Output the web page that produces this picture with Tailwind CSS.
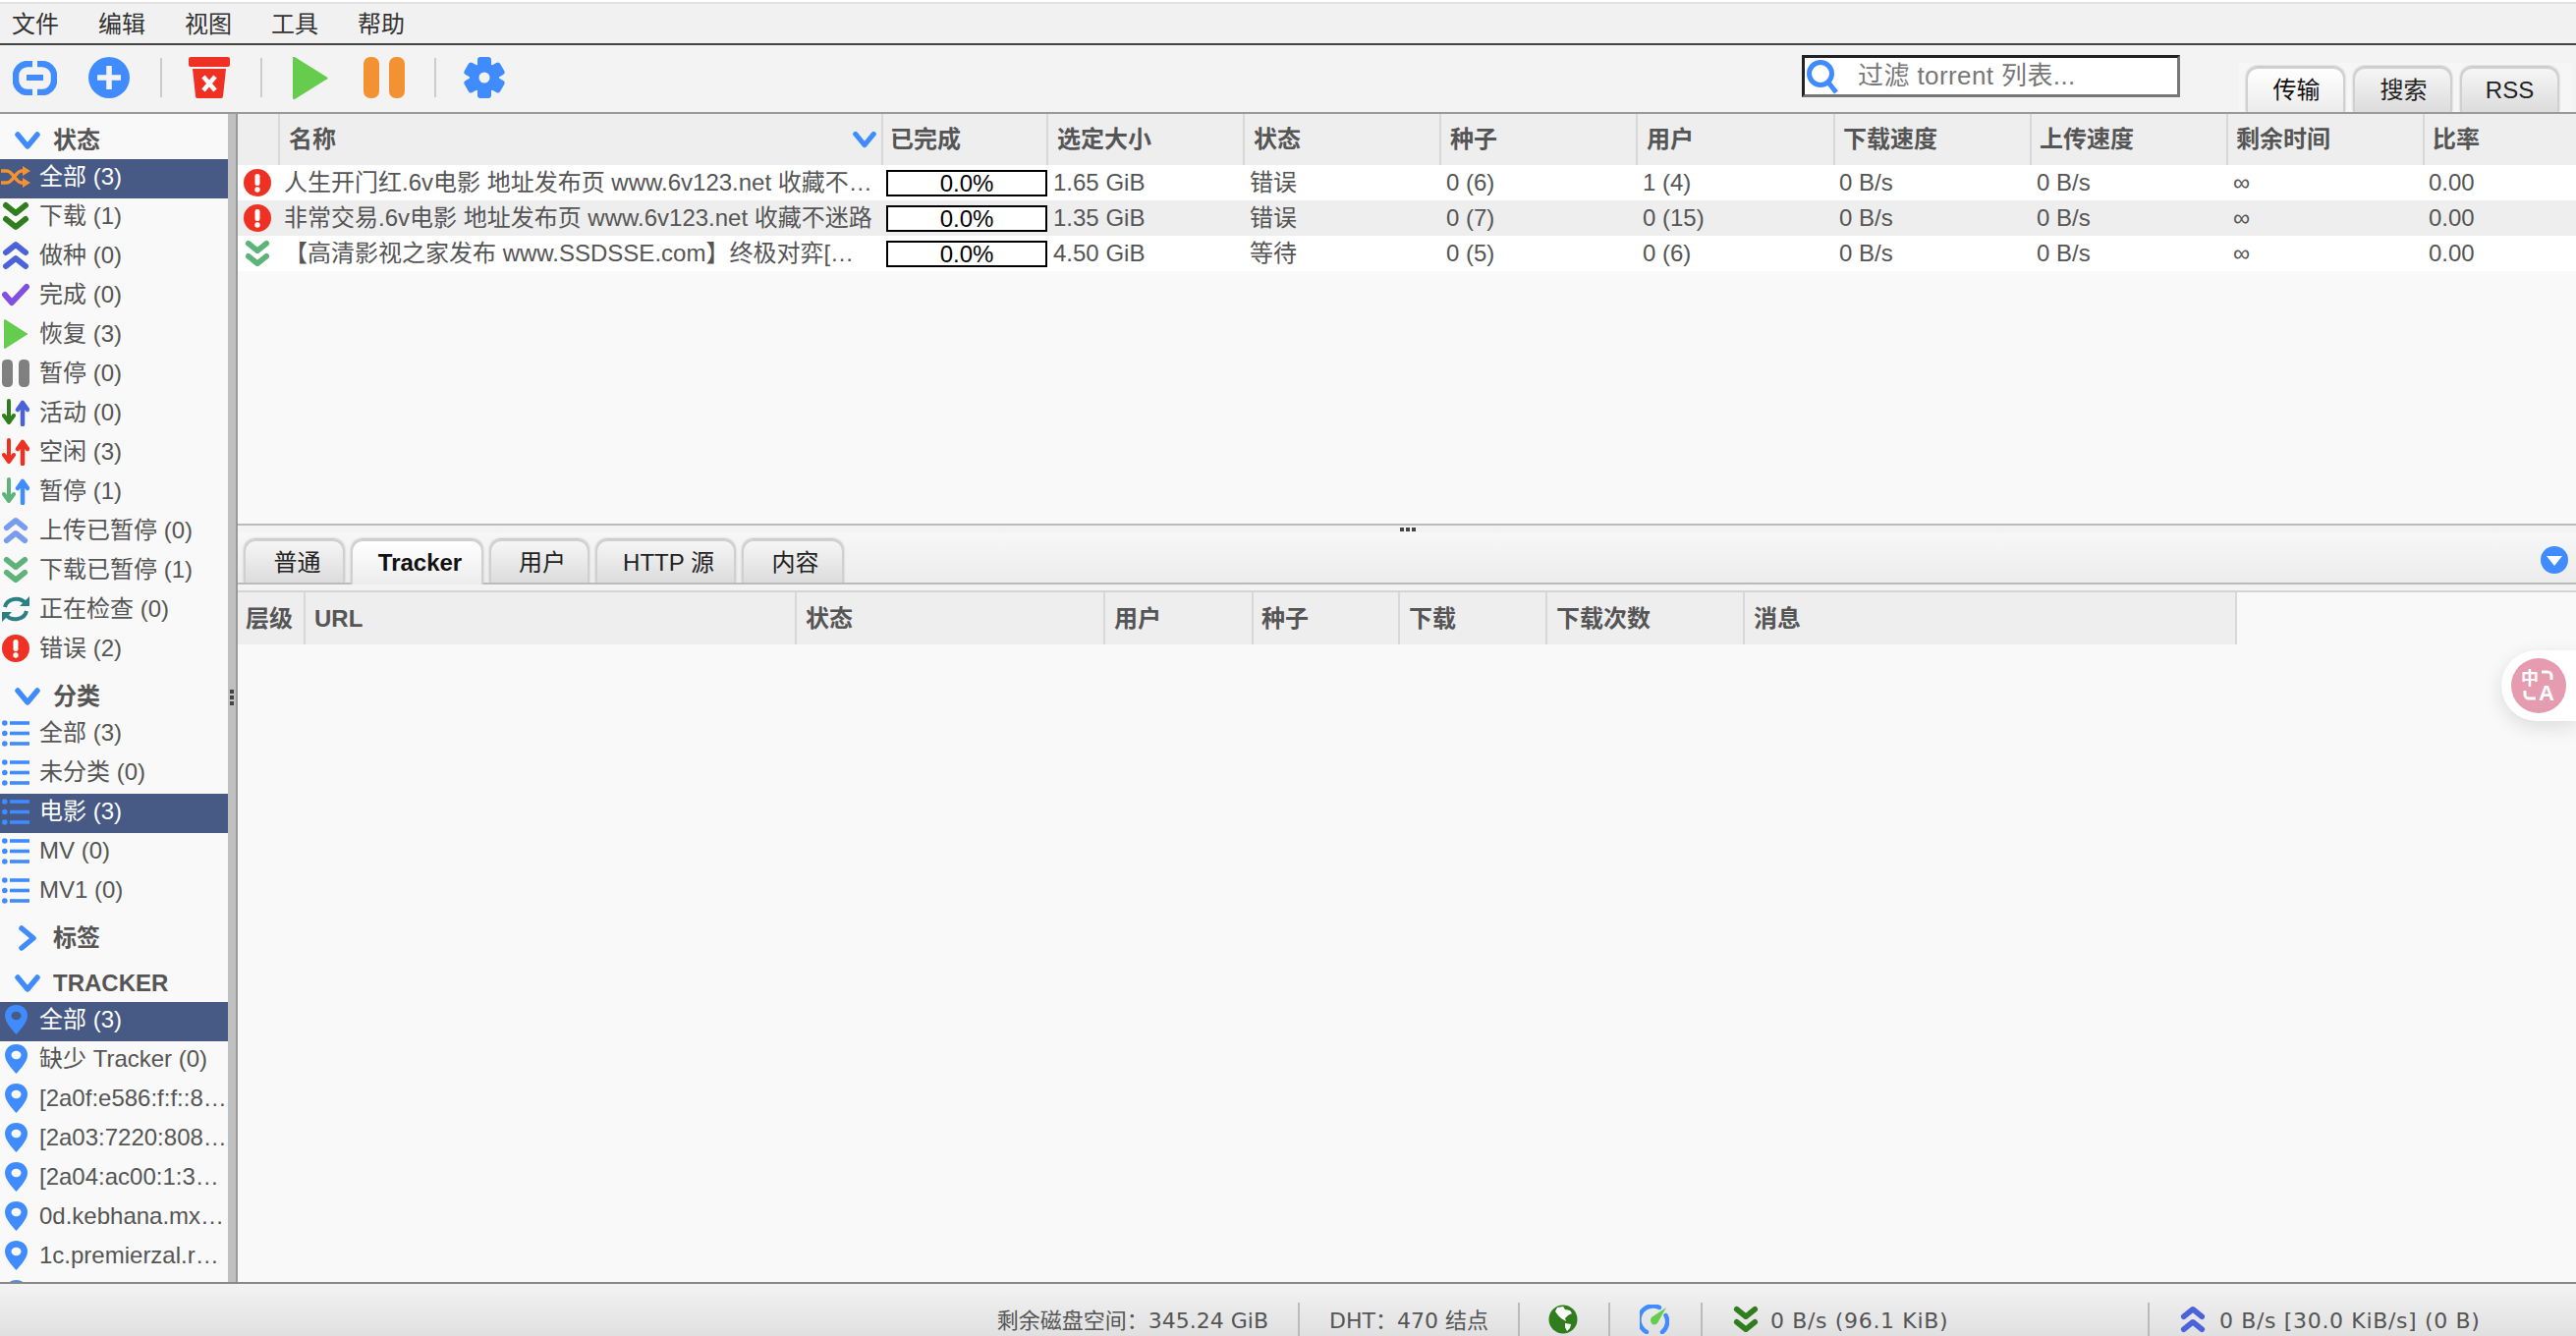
<!DOCTYPE html>
<html lang="zh-CN">
<head>
<meta charset="UTF-8">
<title>qBittorrent WebUI</title>
<script src="https://cdn.jsdelivr.net/npm/@tailwindcss/browser@4"></script>
</head>
<body class="m-0 overflow-hidden bg-white">
<svg class="hidden">
  <defs>
    <symbol id="dd" viewBox="0 0 28 30"><path d="M4 3l10 8 10-8M4 17l10 8 10-8" fill="none" stroke="currentColor" stroke-width="6" stroke-linecap="round" stroke-linejoin="round" transform="translate(0 1)"/></symbol>
    <symbol id="uu" viewBox="0 0 28 30"><path d="M4 13l10-8 10 8M4 27l10-8 10 8" fill="none" stroke="currentColor" stroke-width="6" stroke-linecap="round" stroke-linejoin="round" transform="translate(0 -1)"/></symbol>
    <symbol id="updown" viewBox="0 0 28 28"><path d="M7 2v22M2 17l5 7 5-7" fill="none" stroke="var(--d)" stroke-width="4" stroke-linecap="round" stroke-linejoin="round"/><path d="M21 26V4M16 11l5-7 5 7" fill="none" stroke="var(--u)" stroke-width="4.5" stroke-linecap="round" stroke-linejoin="round"/></symbol>
    <symbol id="err" viewBox="0 0 28 28"><circle cx="14" cy="14" r="14" fill="#ef3123"/><rect x="11.5" y="5" width="5" height="12" rx="2.2" fill="#fff"/><circle cx="14" cy="21" r="2.7" fill="#fff"/></symbol>
    <symbol id="list" viewBox="0 0 28 27"><g fill="#408cff"><circle cx="2.800" cy="3" r="2.800"/><circle cx="2.800" cy="13.500" r="2.800"/><circle cx="2.800" cy="24" r="2.800"/><rect x="8" y="1.200" width="20" height="3.600"/><rect x="8" y="11.700" width="20" height="3.600"/><rect x="8" y="22.200" width="20" height="3.600"/></g></symbol>
    <symbol id="pin" viewBox="0 0 23 30"><path d="M11.500 0C5 0 0 4.500 0 11c0 6 6 13 11.500 19C17 24 23 17 23 11 23 4.500 18 0 11.500 0z" fill="#408cff"/><ellipse cx="11.500" cy="11" rx="5" ry="4.200" fill="var(--h)"/></symbol>
    <symbol id="chev" viewBox="0 0 28 20"><path d="M4 4l10 12L24 4" fill="none" stroke="#408cff" stroke-width="5.500" stroke-linecap="round" stroke-linejoin="round"/></symbol>
  </defs>
</svg>

<div class="w-[2622px] h-[1360px] flex flex-col relative overflow-hidden text-[24px] text-[#555] font-['Liberation_Sans','Noto_Sans_CJK_SC',sans-serif]">

  <!-- menu -->
  <div class="h-[46px] shrink-0 pt-[2px] bg-white">
    <div class="h-full border-t-2 border-b-2 border-t-[#e2e2e2] border-b-[#444] bg-[#f1f1f1] flex items-center pl-[12px] pt-[2px] gap-[40px] text-[#333]">
      <span>文件</span><span>编辑</span><span>视图</span><span>工具</span><span>帮助</span>
    </div>
  </div>

  <!-- toolbar -->
  <div class="h-[70px] shrink-0 bg-[#f3f3f3] border-b-2 border-[#999] flex relative">
    <div class="w-[1834px] flex items-center pl-[13px] pb-[2px]">
      <svg class="w-[45px] h-[35px]" viewBox="0 0 45 35"><path d="M20 3h-5a12 12 0 0 0-12 12v5a12 12 0 0 0 12 12h5M25 3h5a12 12 0 0 1 12 12v5a12 12 0 0 1-12 12h-5" fill="none" stroke="#408cff" stroke-width="6.500"/><rect x="14" y="14" width="17" height="6" fill="#408cff"/></svg>
      <svg class="w-[42px] h-[42px] ml-[32px]" viewBox="0 0 42 42"><circle cx="21" cy="21" r="21" fill="#408cff"/><path d="M21 9v24M9 21h24" stroke="#f3f3f3" stroke-width="5.500"/></svg>
      <div class="w-[2px] h-[40px] bg-[#ccc] ml-[31px]"></div>
      <svg class="w-[42px] h-[42px] ml-[27px]" viewBox="0 0 42 42"><rect width="42" height="10" rx="2" fill="#ef3123"/><path d="M4 12h34l-3 28a2 2 0 0 1-2 2H9a2 2 0 0 1-2-2z" fill="#ef3123"/><path d="M15 20l12 14M27 20L15 34" stroke="#fff" stroke-width="4.500"/></svg>
      <div class="w-[2px] h-[40px] bg-[#ccc] ml-[31px]"></div>
      <svg class="w-[36px] h-[46px] ml-[31px]" viewBox="0 0 36 46"><path d="M2 2l32 20a1.500 1.500 0 0 1 0 3L2 45a1.500 1.500 0 0 1-2-1V2z" fill="#66cc4d"/></svg>
      <svg class="w-[42px] h-[42px] ml-[36px]" viewBox="0 0 42 42"><rect width="16" height="42" rx="7" fill="#f29233"/><rect x="26" width="16" height="42" rx="7" fill="#f29233"/></svg>
      <div class="w-[2px] h-[40px] bg-[#ccc] ml-[30px]"></div>
      <svg class="w-[42px] h-[42px] ml-[28px]" viewBox="0 0 42 42"><g fill="#408cff"><circle cx="21" cy="21" r="15"/><rect x="14" y="0" width="14" height="42" rx="3"/><rect x="14" y="0" width="14" height="42" rx="3" transform="rotate(60 21 21)"/><rect x="14" y="0" width="14" height="42" rx="3" transform="rotate(120 21 21)"/></g><circle cx="21" cy="21" r="5.500" fill="#f3f3f3"/></svg>
    </div>
    <div class="w-[385px] h-[43px] mt-[10px] bg-white border-[3px] border-t-[#222] border-l-[#222] border-r-[#777] border-b-[#777] flex items-center">
      <svg class="w-[34px] h-[36px] ml-[1px] shrink-0" viewBox="0 0 34 36"><circle cx="15" cy="15" r="11.500" fill="none" stroke="#408cff" stroke-width="5"/><path d="M23 24l8 10" stroke="#408cff" stroke-width="5"/></svg>
      <span class="ml-[19px] text-[26px] text-[#777] tracking-[0.4px]">过滤 torrent 列表...</span>
    </div>
    <div class="absolute left-[2279px] top-[18px] w-[339px] h-[50px] bg-[#f6f6f6] flex gap-[8px] pl-[7px] items-end">
      <div class="w-[101px] h-[46px] rounded-t-[12px] border-x-2 border-t-2 border-[#d0d0d0] shadow-[0_-1px_2px_#bbb] bg-linear-to-b from-white to-[#ececec] flex items-center justify-center text-[#111] pl-[2px]">传输</div>
      <div class="w-[101px] h-[46px] rounded-t-[12px] border-x-2 border-t-2 border-[#d0d0d0] shadow-[0_-1px_2px_#bbb] bg-linear-to-b from-[#f6f6f6] to-[#dcdcdc] flex items-center justify-center text-[#222] pl-[2px]">搜索</div>
      <div class="w-[101px] h-[46px] rounded-t-[12px] border-x-2 border-t-2 border-[#d0d0d0] shadow-[0_-1px_2px_#bbb] bg-linear-to-b from-[#f6f6f6] to-[#dcdcdc] flex items-center justify-center text-[#222]">RSS</div>
    </div>
  </div>

  <!-- middle -->
  <div class="flex-1 min-h-0 flex">
    <!-- sidebar -->
    <div class="w-[232px] shrink-0 bg-[#f9f9f9] overflow-hidden">
      <div class="h-[46px] flex items-center pt-[8px] pl-[14px] font-bold"><svg class="w-[28px] h-[20px]"><use href="#chev"/></svg><span class="ml-[12px]">状态</span></div>
      <div class="h-[40px] flex items-center pb-[4px] bg-[#475985] text-white">
        <svg class="w-[30px] h-[22px] ml-[1px] shrink-0" viewBox="0 0 30 22"><path d="M0 5h6c6 0 9 12 15 12h3M0 17h6c6 0 9-12 15-12h3" fill="none" stroke="#f29233" stroke-width="3.500"/><path d="M22 0l8 5-8 5zM22 12l8 5-8 5z" fill="#f29233"/></svg><span class="ml-[9px]">全部 (3)</span>
      </div>
      <div class="h-[40px] flex items-center pb-[4px]"><svg class="w-[28px] h-[30px] ml-[2px] shrink-0 text-[#2f7d1c]"><use href="#dd"/></svg><span class="ml-[10px]">下载 (1)</span></div>
      <div class="h-[40px] flex items-center pb-[4px]"><svg class="w-[28px] h-[30px] ml-[2px] shrink-0 text-[#4a63d9]"><use href="#uu"/></svg><span class="ml-[10px]">做种 (0)</span></div>
      <div class="h-[40px] flex items-center pb-[4px]"><svg class="w-[28px] h-[24px] ml-[2px] shrink-0" viewBox="0 0 28 24"><path d="M3 12l7 8L25 4" fill="none" stroke="#8250e0" stroke-width="6" stroke-linecap="round" stroke-linejoin="round"/></svg><span class="ml-[10px]">完成 (0)</span></div>
      <div class="h-[40px] flex items-center pb-[4px]"><svg class="w-[24px] h-[30px] ml-[4px] shrink-0" viewBox="0 0 24 30"><path d="M1 0l22 14a1 1 0 0 1 0 2L1 30a1 1 0 0 1-1-1V1z" fill="#66cc4d"/></svg><span class="ml-[12px]">恢复 (3)</span></div>
      <div class="h-[40px] flex items-center pb-[4px]"><svg class="w-[28px] h-[28px] ml-[2px] shrink-0" viewBox="0 0 28 28"><rect width="11" height="28" rx="4.500" fill="#808080"/><rect x="17" width="11" height="28" rx="4.500" fill="#808080"/></svg><span class="ml-[10px]">暂停 (0)</span></div>
      <div class="h-[40px] flex items-center pb-[4px] [--d:#2f7d1c] [--u:#4a63d9]"><svg class="w-[28px] h-[28px] ml-[2px] shrink-0"><use href="#updown"/></svg><span class="ml-[10px]">活动 (0)</span></div>
      <div class="h-[40px] flex items-center pb-[4px] [--d:#ef3123] [--u:#ef3123]"><svg class="w-[28px] h-[28px] ml-[2px] shrink-0"><use href="#updown"/></svg><span class="ml-[10px]">空闲 (3)</span></div>
      <div class="h-[40px] flex items-center pb-[4px] [--d:#5eb37a] [--u:#408cff]"><svg class="w-[28px] h-[28px] ml-[2px] shrink-0"><use href="#updown"/></svg><span class="ml-[10px]">暂停 (1)</span></div>
      <div class="h-[40px] flex items-center pb-[4px]"><svg class="w-[26px] h-[28px] ml-[3px] shrink-0 text-[#7a9cf0]"><use href="#uu"/></svg><span class="ml-[11px]">上传已暂停 (0)</span></div>
      <div class="h-[40px] flex items-center pb-[4px]"><svg class="w-[26px] h-[28px] ml-[3px] shrink-0 text-[#5eb37a]"><use href="#dd"/></svg><span class="ml-[11px]">下载已暂停 (1)</span></div>
      <div class="h-[40px] flex items-center pb-[4px]"><svg class="w-[28px] h-[28px] ml-[2px] shrink-0" viewBox="0 0 28 28"><path d="M3 12C5 3 18 1 24 8M25 16C23 25 10 27 4 20" fill="none" stroke="#2c7f86" stroke-width="4"/><path d="M28 1v10H18zM0 27V17h10z" fill="#2c7f86"/></svg><span class="ml-[10px]">正在检查 (0)</span></div>
      <div class="h-[40px] flex items-center pb-[4px]"><svg class="w-[28px] h-[28px] ml-[2px] shrink-0"><use href="#err"/></svg><span class="ml-[10px]">错误 (2)</span></div>

      <div class="h-[46px] flex items-center pt-[8px] pl-[14px] font-bold"><svg class="w-[28px] h-[20px]"><use href="#chev"/></svg><span class="ml-[12px]">分类</span></div>
      <div class="h-[40px] flex items-center pb-[4px]"><svg class="w-[28px] h-[27px] ml-[2px] shrink-0"><use href="#list"/></svg><span class="ml-[10px]">全部 (3)</span></div>
      <div class="h-[40px] flex items-center pb-[4px]"><svg class="w-[28px] h-[27px] ml-[2px] shrink-0"><use href="#list"/></svg><span class="ml-[10px]">未分类 (0)</span></div>
      <div class="h-[40px] flex items-center pb-[4px] bg-[#475985] text-white"><svg class="w-[28px] h-[27px] ml-[2px] shrink-0"><use href="#list"/></svg><span class="ml-[10px]">电影 (3)</span></div>
      <div class="h-[40px] flex items-center pb-[4px]"><svg class="w-[28px] h-[27px] ml-[2px] shrink-0"><use href="#list"/></svg><span class="ml-[10px]">MV (0)</span></div>
      <div class="h-[40px] flex items-center pb-[4px]"><svg class="w-[28px] h-[27px] ml-[2px] shrink-0"><use href="#list"/></svg><span class="ml-[10px]">MV1 (0)</span></div>

      <div class="h-[46px] flex items-center pt-[8px] pl-[14px] font-bold"><svg class="w-[28px] h-[20px] -rotate-90"><use href="#chev"/></svg><span class="ml-[12px]">标签</span></div>
      <div class="h-[46px] flex items-center pt-[8px] pl-[14px] font-bold"><svg class="w-[28px] h-[20px]"><use href="#chev"/></svg><span class="ml-[12px]">TRACKER</span></div>
      <div class="h-[40px] flex items-center pb-[4px] bg-[#475985] text-white [--h:#475985]"><svg class="w-[23px] h-[30px] ml-[5px] shrink-0"><use href="#pin"/></svg><span class="ml-[12px]">全部 (3)</span></div>
      <div class="h-[40px] flex items-center pb-[4px] [--h:#f9f9f9]"><svg class="w-[23px] h-[30px] ml-[5px] shrink-0"><use href="#pin"/></svg><span class="ml-[12px]">缺少 Tracker (0)</span></div>
      <div class="h-[40px] flex items-center pb-[4px] [--h:#f9f9f9]"><svg class="w-[23px] h-[30px] ml-[5px] shrink-0"><use href="#pin"/></svg><span class="ml-[12px]">[2a0f:e586:f:f::8…</span></div>
      <div class="h-[40px] flex items-center pb-[4px] [--h:#f9f9f9]"><svg class="w-[23px] h-[30px] ml-[5px] shrink-0"><use href="#pin"/></svg><span class="ml-[12px]">[2a03:7220:808…</span></div>
      <div class="h-[40px] flex items-center pb-[4px] [--h:#f9f9f9]"><svg class="w-[23px] h-[30px] ml-[5px] shrink-0"><use href="#pin"/></svg><span class="ml-[12px]">[2a04:ac00:1:3…</span></div>
      <div class="h-[40px] flex items-center pb-[4px] [--h:#f9f9f9]"><svg class="w-[23px] h-[30px] ml-[5px] shrink-0"><use href="#pin"/></svg><span class="ml-[12px]">0d.kebhana.mx…</span></div>
      <div class="h-[40px] flex items-center pb-[4px] [--h:#f9f9f9]"><svg class="w-[23px] h-[30px] ml-[5px] shrink-0"><use href="#pin"/></svg><span class="ml-[12px]">1c.premierzal.r…</span></div>
      <div class="h-[40px] flex items-center pb-[4px] [--h:#f9f9f9]"><svg class="w-[23px] h-[30px] ml-[5px] shrink-0"><use href="#pin"/></svg></div>
    </div>
    <!-- splitter -->
    <div class="w-[10px] shrink-0 bg-[#c0c0c0] border-r-2 border-[#999] relative">
      <div class="absolute left-[2px] top-[586px] w-[4px] h-[17px] bg-[repeating-linear-gradient(#444_0,#444_4px,#c0c0c0_4px,#c0c0c0_6px)]"></div>
    </div>

    <!-- right -->
    <div class="flex-1 min-w-0 flex flex-col bg-[#f9f9f9]">
      <!-- torrents table -->
      <div class="h-[417px] shrink-0">
        <div class="h-[52px] bg-[#eee] font-bold grid grid-cols-[43px_614px_168px_200px_200px_200px_201px_200px_200px_200px_154px] items-stretch">
          <div class="border-r-2 border-[#d8d8d8]"></div>
          <div class="border-r-2 border-[#d8d8d8] pl-[9px] flex items-center justify-between pr-[4px]"><span>名称</span><svg class="w-[26px] h-[20px]"><use href="#chev"/></svg></div>
          <div class="border-r-2 border-[#d8d8d8] pl-[7px] flex items-center">已完成</div>
          <div class="border-r-2 border-[#d8d8d8] pl-[9px] flex items-center">选定大小</div>
          <div class="border-r-2 border-[#d8d8d8] pl-[9px] flex items-center">状态</div>
          <div class="border-r-2 border-[#d8d8d8] pl-[9px] flex items-center">种子</div>
          <div class="border-r-2 border-[#d8d8d8] pl-[9px] flex items-center">用户</div>
          <div class="border-r-2 border-[#d8d8d8] pl-[8px] flex items-center">下载速度</div>
          <div class="border-r-2 border-[#d8d8d8] pl-[8px] flex items-center">上传速度</div>
          <div class="border-r-2 border-[#d8d8d8] pl-[8px] flex items-center">剩余时间</div>
          <div class="pl-[8px] flex items-center">比率</div>
        </div>
        <div class="h-[36px] bg-white grid grid-cols-[43px_614px_168px_200px_200px_200px_201px_200px_200px_200px_154px] items-center">
          <svg class="w-[28px] h-[28px] ml-[6px]"><use href="#err"/></svg>
          <div class="pl-[4px] whitespace-nowrap overflow-hidden">人生开门红.6v电影 地址发布页 www.6v123.net 收藏不…</div>
          <div class="pl-[3px]"><div class="w-[164px] h-[27px] bg-white border-2 border-black text-black text-center leading-[23px]">0.0%</div></div>
          <div class="pl-[5px]">1.65 GiB</div><div class="pl-[5px]">错误</div><div class="pl-[5px]">0 (6)</div><div class="pl-[5px]">1 (4)</div><div class="pl-[4px]">0 B/s</div><div class="pl-[5px]">0 B/s</div><div class="pl-[5px]">∞</div><div class="pl-[4px]">0.00</div>
        </div>
        <div class="h-[36px] bg-[#eee] grid grid-cols-[43px_614px_168px_200px_200px_200px_201px_200px_200px_200px_154px] items-center">
          <svg class="w-[28px] h-[28px] ml-[6px]"><use href="#err"/></svg>
          <div class="pl-[4px] whitespace-nowrap overflow-hidden">非常交易.6v电影 地址发布页 www.6v123.net 收藏不迷路</div>
          <div class="pl-[3px]"><div class="w-[164px] h-[27px] bg-white border-2 border-black text-black text-center leading-[23px]">0.0%</div></div>
          <div class="pl-[5px]">1.35 GiB</div><div class="pl-[5px]">错误</div><div class="pl-[5px]">0 (7)</div><div class="pl-[5px]">0 (15)</div><div class="pl-[4px]">0 B/s</div><div class="pl-[5px]">0 B/s</div><div class="pl-[5px]">∞</div><div class="pl-[4px]">0.00</div>
        </div>
        <div class="h-[36px] bg-white grid grid-cols-[43px_614px_168px_200px_200px_200px_201px_200px_200px_200px_154px] items-center">
          <svg class="w-[26px] h-[30px] ml-[7px] text-[#5eb37a]"><use href="#dd"/></svg>
          <div class="pl-[4px] whitespace-nowrap overflow-hidden">【高清影视之家发布 www.SSDSSE.com】终极对弈[…</div>
          <div class="pl-[3px]"><div class="w-[164px] h-[27px] bg-white border-2 border-black text-black text-center leading-[23px]">0.0%</div></div>
          <div class="pl-[5px]">4.50 GiB</div><div class="pl-[5px]">等待</div><div class="pl-[5px]">0 (5)</div><div class="pl-[5px]">0 (6)</div><div class="pl-[4px]">0 B/s</div><div class="pl-[5px]">0 B/s</div><div class="pl-[5px]">∞</div><div class="pl-[4px]">0.00</div>
        </div>
      </div>

      <!-- details -->
      <div class="flex-1 min-h-0 flex flex-col relative">
        <div class="h-[9px] shrink-0 border-t-2 border-[#bbb] bg-[#f3f3f3] relative">
          <div class="absolute left-[1183px] top-[2px] w-[16px] h-[4px] bg-[repeating-linear-gradient(90deg,#444_0,#444_4px,#f3f3f3_4px,#f3f3f3_6px)]"></div>
        </div>
        <div class="h-[53px] shrink-0 border-b-2 border-[#bbb] bg-linear-to-b from-[#f7f7f7] to-[#ececec] flex items-end pl-[6px] gap-[6px]">
          <div class="w-[103px] h-[44px] rounded-t-[12px] border-x-2 border-t-2 border-[#d0d0d0] shadow-[0_-1px_2px_#bbb] bg-linear-to-b from-[#f6f6f6] to-[#dcdcdc] flex items-center justify-center text-[#222] pl-[6px] pt-[2px]">普通</div>
          <div class="w-[135px] h-[46px] -mb-[2px] rounded-t-[12px] border-x-2 border-t-2 border-[#d0d0d0] shadow-[0_-1px_2px_#bbb] bg-linear-to-b from-white to-[#ececec] flex items-center justify-center text-[#111] font-bold pl-[6px]">Tracker</div>
          <div class="w-[102px] h-[44px] rounded-t-[12px] border-x-2 border-t-2 border-[#d0d0d0] shadow-[0_-1px_2px_#bbb] bg-linear-to-b from-[#f6f6f6] to-[#dcdcdc] flex items-center justify-center text-[#222] pl-[6px] pt-[2px]">用户</div>
          <div class="w-[143px] h-[44px] rounded-t-[12px] border-x-2 border-t-2 border-[#d0d0d0] shadow-[0_-1px_2px_#bbb] bg-linear-to-b from-[#f6f6f6] to-[#dcdcdc] flex items-center justify-center text-[#222] pl-[6px] pt-[2px]">HTTP 源</div>
          <div class="w-[104px] h-[44px] rounded-t-[12px] border-x-2 border-t-2 border-[#d0d0d0] shadow-[0_-1px_2px_#bbb] bg-linear-to-b from-[#f6f6f6] to-[#dcdcdc] flex items-center justify-center text-[#222] pl-[5px] pt-[2px]">内容</div>
          <svg class="w-[28px] h-[28px] ml-auto mr-[8px] mb-[9px]" viewBox="0 0 28 28"><circle cx="14" cy="14" r="14" fill="#408cff"/><path d="M6 10h16l-8 10z" fill="#fff"/></svg>
        </div>
        <div class="h-[8px] shrink-0 border-b-2 border-[#d4d4d4] bg-[#f3f3f3]"></div>
        <div class="h-[53px] w-[2035px] shrink-0 bg-[#eee] font-bold grid grid-cols-[69px_500px_314px_151px_149px_150px_201px_501px]">
          <div class="border-r-2 border-[#d8d8d8] pl-[8px] flex items-center">层级</div>
          <div class="border-r-2 border-[#d8d8d8] pl-[9px] flex items-center">URL</div>
          <div class="border-r-2 border-[#d8d8d8] pl-[9px] flex items-center">状态</div>
          <div class="border-r-2 border-[#d8d8d8] pl-[9px] flex items-center">用户</div>
          <div class="border-r-2 border-[#d8d8d8] pl-[8px] flex items-center">种子</div>
          <div class="border-r-2 border-[#d8d8d8] pl-[9px] flex items-center">下载</div>
          <div class="border-r-2 border-[#d8d8d8] pl-[9px] flex items-center">下载次数</div>
          <div class="border-r-2 border-[#d8d8d8] pl-[9px] flex items-center">消息</div>
        </div>
      </div>
    </div>
  </div>

  <!-- status bar -->
  <div class="h-[55px] shrink-0 border-t-2 border-[#888] bg-linear-to-b from-[#f3f3f3] to-[#e0e0e0] flex justify-end pt-[19px] text-[22px] font-['DejaVu_Sans','Noto_Sans_CJK_SC',sans-serif]">
    <div class="h-[34px] flex items-center pr-[30px] pt-[2px]">剩余磁盘空间：345.24 GiB</div>
    <div class="h-[34px] w-[224px] shrink-0 border-l-2 border-[#bbb] flex items-center pl-[30px] pt-[2px]">DHT：470 结点</div>
    <div class="h-[34px] w-[92px] shrink-0 border-l-2 border-[#bbb] flex items-center pl-[29px]">
      <svg class="w-[30px] h-[30px]" viewBox="0 0 30 30"><circle cx="15" cy="15" r="14.500" fill="#2f7d1c"/><path d="M9 3l6-1 2 3 5 1 2 3-4 2-3 3 1 3-5-3-3-3-3-4zM17 19l6 1-1 4-3 3-2-4z" fill="#fff"/></svg>
    </div>
    <div class="h-[34px] w-[94px] shrink-0 border-l-2 border-[#bbb] flex items-center pl-[30px]">
      <svg class="w-[30px] h-[30px]" viewBox="0 0 30 30"><path d="M7 28A13.500 13.500 0 0 1 20 3" fill="none" stroke="#408cff" stroke-width="4.500" stroke-linecap="round"/><path d="M26.500 11A13.500 13.500 0 0 1 23 28" fill="none" stroke="#408cff" stroke-width="4.500" stroke-linecap="round"/><path d="M27 3L12 13q-2 3 0 6t6 0z" fill="#66cc4d"/></svg>
    </div>
    <div class="h-[34px] w-[455px] shrink-0 border-l-2 border-[#bbb] flex items-center pl-[31px]">
      <svg class="w-[26px] h-[30px] shrink-0 text-[#2f7d1c]"><use href="#dd"/></svg><span class="ml-[12px] pt-[2px] tracking-[0.65px]">0 B/s (96.1 KiB)</span>
    </div>
    <div class="h-[34px] w-[436px] shrink-0 border-l-2 border-[#bbb] flex items-center pl-[31px]">
      <svg class="w-[26px] h-[30px] shrink-0 text-[#4a63d9]"><use href="#uu"/></svg><span class="ml-[14px] pt-[2px] tracking-[0.65px]">0 B/s [30.0 KiB/s] (0 B)</span>
    </div>
  </div>

  <!-- translate float -->
  <div class="absolute left-[2546px] top-[662px] w-[76px] h-[72px] bg-white rounded-l-full shadow-[0_6px_20px_rgba(0,0,0,0.12)] flex items-center pl-[10px]">
    <div class="w-[56px] h-[56px] rounded-full bg-[#e59bb0] text-white relative font-bold">
      <span class="absolute left-[10px] top-[11px] text-[18px] leading-[20px]">中</span>
      <span class="absolute left-[28px] top-[26px] text-[22px] leading-[20px]">A</span>
      <svg class="absolute left-0 top-0 w-[56px] h-[56px]" viewBox="0 0 56 56"><path d="M31 14h6a4 4 0 0 1 4 4v4M14 33v4a4 4 0 0 0 4 4h7" fill="none" stroke="#fff" stroke-width="3"/></svg>
    </div>
  </div>
</div>
</body>
</html>
